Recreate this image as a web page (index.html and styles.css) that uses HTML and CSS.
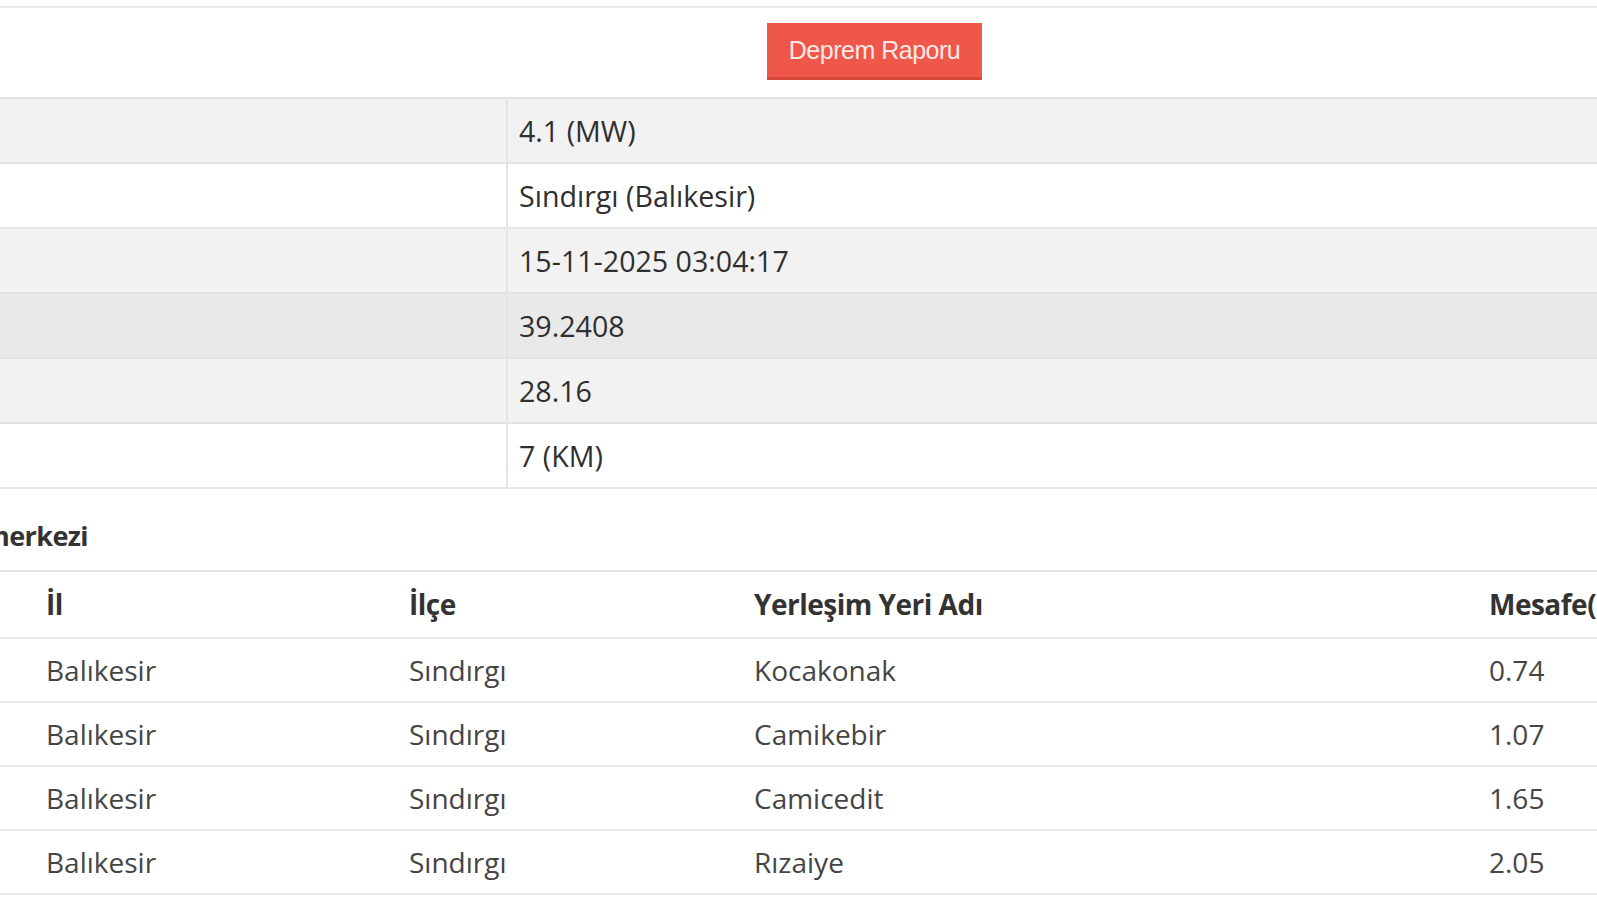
FILE: index.html
```html
<!DOCTYPE html>
<html lang="tr">
<head>
<meta charset="utf-8">
<title>Deprem Raporu</title>
<link rel="stylesheet" href="styles.css">
</head>
<body>
<div class="page">
  <div class="topline"></div>
  <div class="actions">
    <button class="btn-report" type="button">Deprem Raporu</button>
  </div>

  <table class="info">
    <colgroup><col class="c-label"><col></colgroup>
    <tbody>
      <tr class="r-gray"><td class="lbl"></td><td>4.1 (MW)</td></tr>
      <tr class="r-white"><td class="lbl"></td><td>Sındırgı (Balıkesir)</td></tr>
      <tr class="r-gray"><td class="lbl"></td><td>15-11-2025 03:04:17</td></tr>
      <tr class="r-dark"><td class="lbl"></td><td>39.2408</td></tr>
      <tr class="r-gray"><td class="lbl"></td><td>28.16</td></tr>
      <tr class="r-white"><td class="lbl"></td><td>7 (KM)</td></tr>
    </tbody>
  </table>

  <div class="section-title"><h3>Deprem merkezi</h3></div>

  <table class="places">
    <colgroup>
      <col class="c-pad"><col class="c-il"><col class="c-ilce"><col class="c-yer"><col class="c-mes">
    </colgroup>
    <thead>
      <tr><th></th><th>İl</th><th>İlçe</th><th>Yerleşim Yeri Adı</th><th>Mesafe(KM)</th></tr>
    </thead>
    <tbody>
      <tr><td></td><td>Balıkesir</td><td>Sındırgı</td><td>Kocakonak</td><td>0.74</td></tr>
      <tr><td></td><td>Balıkesir</td><td>Sındırgı</td><td>Camikebir</td><td>1.07</td></tr>
      <tr><td></td><td>Balıkesir</td><td>Sındırgı</td><td>Camicedit</td><td>1.65</td></tr>
      <tr><td></td><td>Balıkesir</td><td>Sındırgı</td><td>Rızaiye</td><td>2.05</td></tr>
    </tbody>
  </table>
</div>
</body>
</html>
```

FILE: styles.css
```css
html, body {
  margin: 0;
  padding: 0;
  background: #ffffff;
  overflow: hidden;
}

body {
  font-family: "Open Sans", "Noto Sans", sans-serif;
  color: #333333;
  width: 1597px;
  height: 901px;
}

.page {
  width: 1700px;
}

.topline {
  height: 2px;
  margin-top: 6px;
  background: #e8e8e8;
}

.actions {
  padding: 15px 0 0 767px;
  height: 57px;
  margin-bottom: 17px;
}

.btn-report {
  display: block;
  width: 215px;
  height: 57px;
  margin: 0;
  padding: 0;
  border: 0;
  border-bottom: 3px solid #d9473c;
  background: #f0574b;
  color: #fde9e6;
  font-family: "Liberation Sans", Arial, sans-serif;
  font-size: 25px;
  letter-spacing: -0.5px;
  line-height: 54px;
  text-align: center;
  cursor: pointer;
}

table {
  border-collapse: collapse;
  table-layout: fixed;
  width: 1700px;
}

td, th {
  font-size: 28px;
  line-height: 40px;
  text-align: left;
  white-space: nowrap;
  overflow: hidden;
}

.info {
  border-bottom: 2px solid #e6e6e6;
}

.info .c-label {
  width: 507px;
}

.info td {
  padding: 12px 10px 11px 11px;
  border-top: 2px solid #e3e3e3;
  color: #2f2f2f;
  font-size: 28.6px;
}

.info td.lbl {
  padding: 0;
}

.info td + td {
  border-left: 2px solid #e4e4e4;
}

.info .r-gray td { background: #f2f2f2; }
.info .r-white td { background: #ffffff; }
.info .r-dark td { background: #e9e9e9; }

.section-title {
  width: 88px;
  height: 40px;
  margin: 27px 0 14px 0;
  display: flex;
  justify-content: flex-end;
}

.section-title h3 {
  margin: 0;
  flex: none;
  font-size: 27px;
  line-height: 40px;
  font-weight: 700;
  white-space: nowrap;
  color: #333333;
  letter-spacing: -0.6px;
}

.places .c-pad { width: 34px; }
.places .c-il { width: 363px; }
.places .c-ilce { width: 345px; }
.places .c-yer { width: 735px; }

.places th {
  padding: 12px 12px 13px 12px;
  border-top: 2px solid #e3e3e3;
  font-weight: 700;
  color: #333333;
  letter-spacing: -0.5px;
}

.places td {
  padding: 11px 12px 11px 12px;
  border-top: 2px solid #e6e6e6;
  color: #454545;
}

.places th:first-child,
.places td:first-child {
  padding: 0;
}

.places tbody tr:last-child td {
  border-bottom: 2px solid #e6e6e6;
}
```
